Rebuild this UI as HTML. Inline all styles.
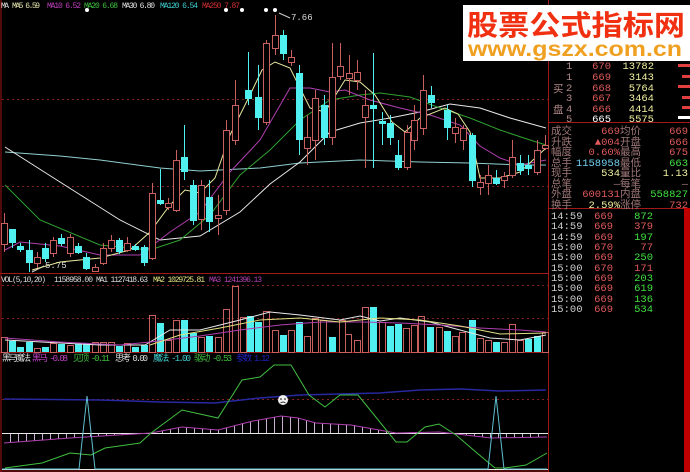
<!DOCTYPE html>
<html><head><meta charset="utf-8"><style>
html,body{margin:0;padding:0;background:#000;width:690px;height:472px;overflow:hidden}
svg{display:block}
text{font-family:"Liberation Mono","Noto Sans CJK SC",monospace}
</style></head><body>
<svg width="690" height="472" viewBox="0 0 690 472" xmlns="http://www.w3.org/2000/svg">
<rect width="690" height="472" fill="#000"/>
<g stroke="#a01818" stroke-width="1" fill="none">
<line x1="1" y1="0" x2="1" y2="472"/>
<line x1="548.5" y1="0" x2="548.5" y2="472"/>
<line x1="0" y1="273.5" x2="548" y2="273.5"/>
<line x1="0" y1="352.5" x2="548" y2="352.5"/>
<line x1="0" y1="471" x2="548" y2="471"/>
<line x1="548" y1="122.5" x2="690" y2="122.5"/>
<line x1="548" y1="208.5" x2="690" y2="208.5"/>
</g>
<rect x="684" y="208" width="6" height="264" fill="#c00000"/>
<g stroke="#802020" stroke-dasharray="2,3" stroke-width="1">
<line x1="2" y1="99.5" x2="548" y2="99.5"/>
<line x1="2" y1="186.5" x2="548" y2="186.5"/>
<line x1="2" y1="285.5" x2="548" y2="285.5"/>
<line x1="2" y1="318.5" x2="548" y2="318.5"/>
<line x1="2" y1="399.5" x2="548" y2="399.5"/>
</g>
<g font-size="8" lengthAdjust="spacingAndGlyphs">
<text x="1" y="8" fill="#e0e0e0" textLength="8">MA</text>
<text x="12" y="8" fill="#e8e8b0" textLength="28">MA5 6.59</text>
<text x="47" y="8" fill="#c040c0" textLength="34">MA10 6.52</text>
<text x="84" y="8" fill="#40c040" textLength="34">MA20 6.68</text>
<text x="122" y="8" fill="#e0e0e0" textLength="33">MA30 6.80</text>
<text x="160" y="8" fill="#40d0d0" textLength="38">MA120 6.54</text>
<text x="202" y="8" fill="#d03030" textLength="38">MA250 7.87</text>
</g>
<g fill="#fff"><circle cx="87" cy="10" r="2"/><circle cx="226" cy="10" r="2"/><circle cx="242" cy="10" r="2"/><circle cx="266" cy="10" r="2"/><circle cx="275" cy="10" r="2"/></g>
<line x1="279" y1="13" x2="290" y2="18" stroke="#ccc"/>
<text x="291" y="20" font-size="9" fill="#ddd">7.66</text>
<line x1="32" y1="272" x2="44" y2="266" stroke="#ccc"/>
<text x="45" y="268" font-size="9" fill="#ddd">5.75</text>
<g fill="none" stroke-width="1">
<polyline stroke="#90d0d0" points="5,152 60,156 100,160 160,168 200,171 260,168 300,163 360,160 420,162 470,163 520,165 546,165"/>
<polyline stroke="#e8e8e8" points="5,147 60,182 120,220 160,240 200,236 240,212 270,184 300,162 330,132 360,123 390,118 420,112 450,104 480,108 510,118 546,128"/>
<polyline stroke="#30a030" points="5,185 40,220 100,245 150,250 180,240 210,215 240,175 270,150 300,120 330,100 360,95 380,93 410,97 440,108 470,118 500,130 530,140 546,145"/>
<polyline stroke="#b040b0" points="5,250 20,242 60,246 100,255 140,255 170,232 200,212 230,172 260,140 290,88 310,88 330,92 345,90 370,100 400,108 430,115 460,125 480,146 500,158 520,165 546,160"/>
<polyline stroke="#e8e8a0" points="32,270 60,262 100,258 130,250 150,232 170,205 185,190 200,193 215,178 230,135 250,95 262,70 275,62 290,68 300,88 310,108 325,112 345,80 360,82 375,95 392,122 405,132 420,118 445,108 458,114 470,132 480,178 500,178 520,172 546,148"/>
</g>
<!-- red candles -->
<path stroke="#c86060" fill="none" d="M4.5 213V252M37.5 252V268M53.5 237V257M70.5 234V257M95.5 264V272M103.5 243V265M111.5 235V252M127.5 237V252M152.5 183V260M168.5 198V210M176.5 150V212M201.5 180V230M218.5 195V235M226.5 120V215M235.5 80V145M266.5 40V125M275.5 15V55M291.5 50V66M307.5 115V165M315.5 90V160M332.5 43V145M340.5 43V80M349.5 55V95M357.5 60V90M365.5 90V168M407.5 125V170M414.5 105V150M423.5 75V135M455.5 118V143M463.5 125V150M480.5 175V195M488.5 165V195M504.5 172V188M512.5 140V178M537.5 140V175M545.5 135V150"/>
<g fill="#000" stroke="#c86060">
<rect x="1.5" y="223.5" width="6" height="21"/><rect x="34.5" y="257.5" width="6" height="6"/><rect x="50.5" y="240.5" width="6" height="13"/><rect x="67.5" y="237.5" width="6" height="16"/><rect x="92.5" y="267.5" width="6" height="4"/><rect x="100.5" y="248.5" width="6" height="15"/><rect x="108.5" y="240.5" width="6" height="8"/><rect x="124.5" y="243.5" width="6" height="7"/><rect x="149.5" y="193.5" width="6" height="65"/><rect x="165.5" y="203.5" width="6" height="4"/><rect x="173.5" y="160.5" width="6" height="50"/><rect x="198.5" y="185.5" width="6" height="34"/><rect x="215.5" y="215.5" width="6" height="3"/><rect x="223.5" y="130.5" width="6" height="80"/><rect x="232.5" y="105.5" width="6" height="35"/><rect x="263.5" y="43.5" width="6" height="79"/><rect x="272.5" y="35.5" width="6" height="13"/><rect x="288.5" y="57.5" width="6" height="5"/><rect x="304.5" y="137.5" width="6" height="11"/><rect x="312.5" y="98.5" width="6" height="42"/><rect x="329.5" y="77.5" width="6" height="60"/><rect x="337.5" y="66.5" width="6" height="10"/><rect x="346.5" y="73.5" width="6" height="5"/><rect x="354.5" y="72.5" width="6" height="8"/><rect x="362.5" y="105.5" width="6" height="12"/><rect x="404.5" y="132.5" width="6" height="35"/><rect x="411.5" y="120.5" width="6" height="20"/><rect x="420.5" y="90.5" width="6" height="38"/><rect x="452.5" y="127.5" width="6" height="6"/><rect x="460.5" y="128.5" width="6" height="12"/><rect x="477.5" y="182.5" width="6" height="5"/><rect x="485.5" y="175.5" width="6" height="8"/><rect x="501.5" y="176.5" width="6" height="4"/><rect x="509.5" y="157.5" width="6" height="18"/><rect x="534.5" y="150.5" width="6" height="22"/><rect x="542.5" y="145.5" width="6" height="3"/>
</g>
<!-- cyan candles -->
<path stroke="#50f0f0" fill="none" d="M12.5 229V248M20.5 243V252M29.5 240V272M45.5 243V262M61.5 234V246M78.5 243V254M86.5 253V270M119.5 238V254M135.5 244V251M144.5 245V266M160.5 169V205M184.5 125V180M193.5 180V225M209.5 180V232M248.5 52V105M258.5 65V130M283.5 30V60M299.5 65V155M324.5 95V145M373.5 53V168M382.5 112V145M390.5 115V145M398.5 140V170M431.5 86V108M447.5 105V140M472.5 133V187M496.5 170V185M520.5 155V175M528.5 155V175"/>
<g fill="#50f0f0">
<rect x="9" y="229" width="7" height="14"/><rect x="17" y="246" width="7" height="4"/><rect x="26" y="250" width="7" height="13"/><rect x="42" y="248" width="7" height="11"/><rect x="58" y="238" width="7" height="6"/><rect x="75" y="246" width="7" height="7"/><rect x="83" y="257" width="7" height="12"/><rect x="116" y="240" width="7" height="12"/><rect x="132" y="246" width="7" height="4"/><rect x="141" y="247" width="7" height="16"/><rect x="157" y="200" width="7" height="4"/><rect x="181" y="157" width="7" height="15"/><rect x="190" y="185" width="7" height="36"/><rect x="206" y="197" width="7" height="25"/><rect x="245" y="90" width="7" height="9"/><rect x="255" y="97" width="7" height="21"/><rect x="280" y="35" width="7" height="19"/><rect x="296" y="73" width="7" height="67"/><rect x="321" y="105" width="7" height="33"/><rect x="370" y="105" width="7" height="4"/><rect x="379" y="121" width="7" height="3"/><rect x="387" y="123" width="7" height="15"/><rect x="395" y="155" width="7" height="13"/><rect x="428" y="95" width="7" height="8"/><rect x="444" y="110" width="7" height="18"/><rect x="469" y="135" width="7" height="46"/><rect x="493" y="178" width="7" height="6"/><rect x="517" y="163" width="7" height="8"/><rect x="525" y="165" width="7" height="4"/>
</g>
<g font-size="8" lengthAdjust="spacingAndGlyphs">
<text x="1" y="282" fill="#ddd" textLength="45">VOL(5,10,20)</text>
<text x="54" y="282" fill="#ddd" textLength="39">1158958.00</text>
<text x="96" y="282" fill="#ddd" textLength="52">MA1 1127418.63</text>
<text x="153" y="282" fill="#e0e080" textLength="52">MA2 1029725.81</text>
<text x="209" y="282" fill="#b040b0" textLength="53">MA3 1241396.13</text>
</g>
<!-- volume bars -->
<g fill="none" stroke="#c86060">
<rect x="1.5" y="337.5" width="6" height="15"/><rect x="34.5" y="348.5" width="6" height="4"/><rect x="50.5" y="343.5" width="6" height="9"/><rect x="67.5" y="345.5" width="6" height="7"/><rect x="92.5" y="342.5" width="6" height="10"/><rect x="100.5" y="342.5" width="6" height="10"/><rect x="108.5" y="342.5" width="6" height="10"/><rect x="124.5" y="343.5" width="6" height="9"/><rect x="149.5" y="315.5" width="6" height="37"/><rect x="165.5" y="340.5" width="6" height="12"/><rect x="173.5" y="320.5" width="6" height="32"/><rect x="198.5" y="337.5" width="6" height="15"/><rect x="215.5" y="337.5" width="6" height="15"/><rect x="223.5" y="309.5" width="6" height="43"/><rect x="232.5" y="286.5" width="6" height="66"/><rect x="240.5" y="317.5" width="6" height="35"/><rect x="263.5" y="311.5" width="6" height="41"/><rect x="272.5" y="330.5" width="6" height="22"/><rect x="288.5" y="330.5" width="6" height="22"/><rect x="304.5" y="336.5" width="6" height="16"/><rect x="312.5" y="318.5" width="6" height="34"/><rect x="320.5" y="320.5" width="6" height="32"/><rect x="339.5" y="320.5" width="6" height="32"/><rect x="345.5" y="334.5" width="6" height="18"/><rect x="354.5" y="340.5" width="6" height="12"/><rect x="362.5" y="307.5" width="6" height="45"/><rect x="379.5" y="322.5" width="6" height="30"/><rect x="403.5" y="328.5" width="6" height="24"/><rect x="411.5" y="325.5" width="6" height="27"/><rect x="418.5" y="316.5" width="6" height="36"/><rect x="436.5" y="327.5" width="6" height="25"/><rect x="452.5" y="336.5" width="6" height="16"/><rect x="459.5" y="332.5" width="6" height="20"/><rect x="477.5" y="338.5" width="6" height="14"/><rect x="485.5" y="340.5" width="6" height="12"/><rect x="501.5" y="342.5" width="6" height="10"/><rect x="509.5" y="324.5" width="6" height="28"/><rect x="517.5" y="340.5" width="6" height="12"/><rect x="542.5" y="332.5" width="6" height="20"/>
</g>
<g fill="#50f0f0">
<rect x="9" y="341" width="7" height="11"/><rect x="17" y="347" width="7" height="5"/><rect x="26" y="342" width="7" height="10"/><rect x="42" y="347" width="7" height="5"/><rect x="58" y="344" width="7" height="8"/><rect x="75" y="344" width="7" height="8"/><rect x="83" y="343" width="7" height="9"/><rect x="116" y="346" width="7" height="6"/><rect x="132" y="347" width="7" height="5"/><rect x="141" y="345" width="7" height="7"/><rect x="157" y="323" width="7" height="29"/><rect x="181" y="320" width="7" height="32"/><rect x="190" y="333" width="7" height="19"/><rect x="206" y="336" width="7" height="16"/><rect x="247" y="316" width="7" height="36"/><rect x="255" y="322" width="7" height="30"/><rect x="280" y="335" width="7" height="17"/><rect x="296" y="322" width="7" height="30"/><rect x="329" y="337" width="7" height="15"/><rect x="370" y="307" width="7" height="45"/><rect x="387" y="326" width="7" height="26"/><rect x="395" y="324" width="7" height="28"/><rect x="427" y="327" width="7" height="25"/><rect x="444" y="331" width="7" height="21"/><rect x="469" y="320" width="7" height="32"/><rect x="493" y="342" width="7" height="10"/><rect x="525" y="339" width="7" height="13"/><rect x="534" y="336" width="7" height="16"/>
</g>
<g fill="none">
<polyline stroke="#e8e8e8" points="5,340 60,343 100,345 145,345 170,330 200,330 240,320 270,312 300,315 340,320 360,316 380,321 400,318 430,322 460,330 490,338 520,340 546,335"/>
<polyline stroke="#b040b0" points="5,338 60,342 120,345 150,342 200,336 240,330 280,325 320,322 360,322 400,323 440,325 480,328 520,330 546,332"/>
<polyline stroke="#e0e080" points="150,345 180,335 220,328 260,320 300,318 340,322 380,318 420,320 460,326 500,334 546,333"/>
</g>
<g font-size="9" lengthAdjust="spacingAndGlyphs">
<text x="2" y="361" fill="#ddd" textLength="29">黑马魔法</text>
<text x="32" y="361" fill="#c040c0" textLength="36">黑马 -0.08</text>
<text x="73" y="361" fill="#40c040" textLength="37">见顶 -0.11</text>
<text x="115" y="361" fill="#ddd" textLength="33">思考 0.00</text>
<text x="153" y="361" fill="#40d0d0" textLength="38">魔法 -1.00</text>
<text x="194" y="361" fill="#40c040" textLength="38">驱动 -0.53</text>
<text x="236" y="361" fill="#2020c0" textLength="34">参数 1.12</text>
</g>
<polyline fill="none" stroke="#2828a0" stroke-width="1.5" points="4,399 100,400 160,402 215,403 260,398 300,395 340,394 380,393 420,390 460,389 500,391 546,390"/>
<path stroke="#c8b0d0" fill="none" d="M10.5 433V442.5M18.5 433V442M26.5 433V441M34.5 433V441M42.5 433V440M50.5 433V439.5M58.5 433V439M66.5 433V438.5M74.5 433V438M82.5 433V437M90.5 433V437M98.5 433V436M106.5 433V436M114.5 433V435M122.5 433V435M130.5 433V434M162.5 433V431M170.5 433V429M178.5 433V428M186.5 433V427M194.5 433V428M202.5 433V429M210.5 433V429M218.5 433V430M226.5 433V428M234.5 433V426M242.5 433V423M250.5 433V421M258.5 433V420M266.5 433V419M274.5 433V417M282.5 433V416M290.5 433V417M298.5 433V418M306.5 433V420M314.5 433V422M322.5 433V423M330.5 433V424M338.5 433V424M346.5 433V425M354.5 433V425M362.5 433V427M370.5 433V428M378.5 433V430M386.5 433V431M458.5 433V434M466.5 433V435M474.5 433V436M482.5 433V437M490.5 433V438M498.5 433V438M506.5 433V438M514.5 433V438M522.5 433V438M530.5 433V438M538.5 433V437"/>
<line x1="2" y1="433.5" x2="548" y2="433.5" stroke="#e8e8e8"/>
<line x1="2" y1="469.5" x2="548" y2="469.5" stroke="#e8e8e8"/>
<polyline fill="none" stroke="#b040b0" points="4,443 70,438 151,433 182,427 218,430 253,421 281,416 298,418 316,423 351,425 379,430 396,433 439,432 491,438 547,437"/>
<polyline fill="none" stroke="#40c040" points="5,468 42,463 70,453 91,455 105,448 140,443 151,433 182,410 218,418 242,380 260,377 274,365 291,365 309,395 325,407 340,395 358,395 396,442 407,442 425,427 439,424 456,435 477,453 495,468 505,468 526,465 547,453"/>
<polyline fill="none" stroke="#60c0d0" points="2,469 79,469 87,396 95,469 488,469 496,396 504,469 547,469"/>
<circle cx="283" cy="400" r="5" fill="#f0f0f0"/>
<circle cx="281" cy="399" r="0.8" fill="#000"/><circle cx="285" cy="399" r="0.8" fill="#000"/>
<path d="M280.5,403 Q283,401 285.5,403" stroke="#000" fill="none" stroke-width="0.8"/>
<!-- watermark -->
<rect x="463" y="5" width="227" height="56" fill="#fff"/>
<text x="467" y="35" font-size="28" font-weight="bold" fill="#f03010" style="font-family:'Noto Sans CJK SC',sans-serif" textLength="218" lengthAdjust="spacingAndGlyphs">股票公式指标网</text>
<text x="468" y="56" font-size="21" font-weight="bold" fill="#f0a020" style="font-family:'Liberation Sans',sans-serif" textLength="214" lengthAdjust="spacingAndGlyphs">www.gszx.com.cn</text>
<!-- right panel -->
<g font-size="10.5">
<g fill="#b08888"><text x="566" y="69">1</text><text x="566" y="80">1</text><text x="566" y="91">2</text><text x="566" y="101">3</text><text x="566" y="112">4</text><text x="566" y="122">5</text>
<text x="553" y="92">买</text><text x="553" y="113">盘</text></g>
<g fill="#e05a5a" text-anchor="end"><text x="611" y="69">670</text><text x="611" y="80">669</text><text x="611" y="91">668</text><text x="611" y="101">667</text><text x="611" y="112">666</text></g>
<text x="611" y="122" fill="#fff" text-anchor="end">665</text>
<g fill="#f0f0a0" text-anchor="end"><text x="654" y="69">13782</text><text x="654" y="80">3143</text><text x="654" y="91">5764</text><text x="654" y="101">3464</text><text x="654" y="112">4414</text><text x="654" y="122">5575</text></g>
<g fill="#e04040"><rect x="678" y="64" width="12" height="3"/><rect x="682" y="75" width="8" height="3"/><rect x="678" y="85" width="12" height="3"/><rect x="682" y="96" width="8" height="3"/><rect x="682" y="106" width="8" height="3"/></g>
<rect x="678" y="116" width="12" height="3" fill="#fff"/>
<g fill="#a07878"><text x="551" y="134">成交</text><text x="551" y="145">升跌</text><text x="551" y="155">幅度</text><text x="551" y="166">总手</text><text x="551" y="176">现手</text><text x="551" y="187">总笔</text><text x="551" y="197">外盘</text><text x="551" y="208">换手</text>
<text x="620" y="134">均价</text><text x="620" y="145">开盘</text><text x="620" y="155">最高</text><text x="620" y="166">最低</text><text x="620" y="176">量比</text><text x="620" y="187">每笔</text><text x="620" y="197">内盘</text><text x="620" y="208">涨停</text></g>
<g text-anchor="end"><text x="620" y="134" fill="#e05a5a">669</text><text x="620" y="145" fill="#e05a5a">▲004</text><text x="620" y="155" fill="#e05a5a">0.60%</text><text x="620" y="166" fill="#70d0f0">1158958</text><text x="620" y="176" fill="#f0f0a0">534</text><text x="620" y="187" fill="#a07878">—</text><text x="620" y="197" fill="#e05a5a">600131</text><text x="620" y="208" fill="#f0f0a0">2.59%</text>
<text x="688" y="134" fill="#e05a5a">669</text><text x="688" y="145" fill="#e05a5a">666</text><text x="688" y="155" fill="#e05a5a">675</text><text x="688" y="166" fill="#40e040">663</text><text x="688" y="176" fill="#f0f0a0">1.13</text><text x="688" y="187" fill="#a07878">—</text><text x="688" y="197" fill="#40e040">558827</text><text x="688" y="208" fill="#e05a5a">732</text></g>
<g fill="#d0d0d0"><text x="551" y="219">14:59</text><text x="551" y="229">14:59</text><text x="551" y="240">14:59</text><text x="551" y="250">15:00</text><text x="551" y="260">15:00</text><text x="551" y="271">15:00</text><text x="551" y="281">15:00</text><text x="551" y="291">15:00</text><text x="551" y="302">15:00</text><text x="551" y="312">15:00</text></g>
<g fill="#e05a5a" text-anchor="end"><text x="613" y="219">669</text><text x="613" y="229">669</text><text x="613" y="240">669</text><text x="613" y="250">670</text><text x="613" y="260">669</text><text x="613" y="271">670</text><text x="613" y="281">669</text><text x="613" y="291">669</text><text x="613" y="302">669</text><text x="613" y="312">669</text></g>
<g text-anchor="end"><text x="653" y="219" fill="#40e040">872</text><text x="653" y="229" fill="#e05a5a">379</text><text x="653" y="240" fill="#40e040">197</text><text x="653" y="250" fill="#e05a5a">77</text><text x="653" y="260" fill="#40e040">250</text><text x="653" y="271" fill="#e05a5a">171</text><text x="653" y="281" fill="#40e040">203</text><text x="653" y="291" fill="#40e040">619</text><text x="653" y="302" fill="#40e040">136</text><text x="653" y="312" fill="#40e040">534</text></g>
</g>
</svg>
</body></html>
